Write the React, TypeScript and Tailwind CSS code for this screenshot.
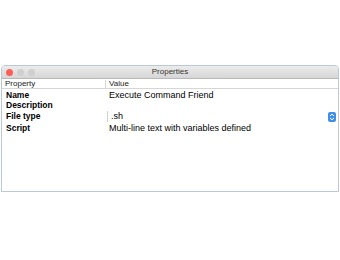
export default function App() {
  const rows = [
    { name: "Name", value: "Execute Command Friend" },
    { name: "Description", value: "" },
    { name: "File type", value: ".sh", select: true },
    { name: "Script", value: "Multi-line text with variables defined" },
  ];

  return (
    <div className="h-[260px] w-[340px] bg-white pt-[65px] font-['Liberation_Sans',Arial,sans-serif]">
      <div className="mx-[1px] flex h-[127px] flex-col overflow-hidden rounded-t-[4px] border border-[#b9c9d6] bg-white">
        <div className="relative flex h-[13px] items-center justify-center border-b border-[#b8b8b8] bg-gradient-to-b from-[#ececec] to-[#d6d6d6]">
          <div className="absolute left-[4px] top-[3px] flex gap-[4px]">
            <span className="h-[7px] w-[7px] rounded-full bg-[#fc5f57]" />
            <span className="h-[7px] w-[7px] rounded-full bg-[#cfcfcf]" />
            <span className="h-[7px] w-[7px] rounded-full bg-[#cfcfcf]" />
          </div>
          <span className="text-[8px] leading-none text-[#333]">Properties</span>
        </div>
        <div className="flex h-[10px] items-center border-b border-[#d6d6d6] text-[8px] leading-none text-[#222]">
          <div className="w-[104px] border-r border-[#d6d6d6] pl-[3px]">Property</div>
          <div className="pl-[3px]">Value</div>
        </div>
        <div className="flex flex-col pt-[1px]">
          {rows.map((r) => (
            <div
              key={r.name}
              className={`flex items-center text-[9px] leading-none text-black ${r.select ? "h-[13px]" : "h-[10px]"}`}
            >
              <div className="w-[105px] pl-[4px] text-[8.5px] font-bold">{r.name}</div>
              {r.select ? (
                <div className="flex flex-1 items-center pr-[2px]">
                  <div className="flex h-[11px] flex-1 items-center border-l border-[#d0d0d0] pl-[3px]">
                    {r.value}
                  </div>
                  <div className="flex h-[10px] w-[8px] flex-col items-center justify-center rounded-[2px] bg-[#3f8ee8]">
                    <svg width="6" height="8" viewBox="0 0 6 8">
                      <path d="M1 3 L3 1.2 L5 3" fill="none" stroke="white" strokeWidth="1" />
                      <path d="M1 5 L3 6.8 L5 5" fill="none" stroke="white" strokeWidth="1" />
                    </svg>
                  </div>
                </div>
              ) : (
                <div className="pl-[2px]">{r.value}</div>
              )}
            </div>
          ))}
        </div>
      </div>
    </div>
  );
}
